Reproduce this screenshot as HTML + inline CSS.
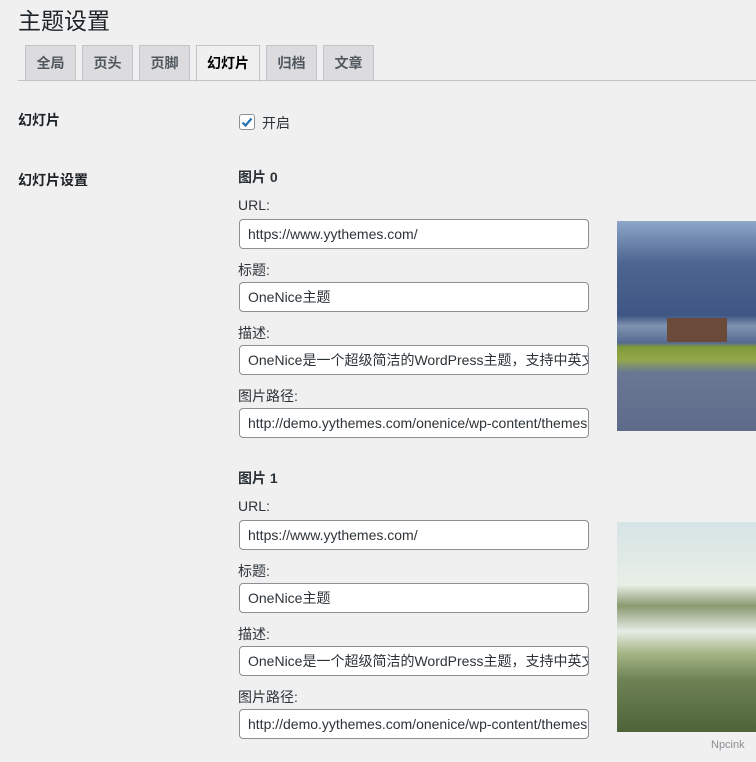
<!DOCTYPE html><html><head><meta charset="utf-8"><style>
body{margin:0;width:756px;height:762px;background:#f0f0f1;font-family:"Liberation Sans","Noto Sans CJK SC",sans-serif;color:#1d2327;position:relative;overflow:hidden;font-size:13px}
.a{position:absolute}
h1{position:absolute;left:18px;top:2px;margin:0;font-size:23px;font-weight:400}
.tab{position:absolute;top:45px;height:34px;border:1px solid #c3c4c7;border-bottom:none;background:#dcdcde;font-size:14px;font-weight:600;color:#50575e;text-align:center;line-height:34px;width:49px}
.tab.on{background:#f0f0f1;color:#000;height:36px;width:62px}
.line{position:absolute;left:18px;right:0;top:80px;border-top:1px solid #c3c4c7}
.lbl{position:absolute;left:18px;font-size:14px;font-weight:600}
.inp{position:absolute;left:239px;width:340px;height:28px;border:1px solid #8c8f94;border-radius:4px;background:#fff;padding-left:8px;line-height:28px;font-size:14px;color:#2c3338;white-space:nowrap;overflow:hidden}
.t{position:absolute;left:238px;font-size:14px;color:#2c3338}
.b{font-weight:600}
</style></head><body>
<h1>主题设置</h1>
<div class="tab" style="left:25px">全局</div>
<div class="tab" style="left:82px">页头</div>
<div class="tab" style="left:139px">页脚</div>
<div class="tab on" style="left:196px">幻灯片</div>
<div class="tab" style="left:266px">归档</div>
<div class="tab" style="left:323px">文章</div>
<div class="line"></div>
<div class="lbl" style="top:110px">幻灯片</div>
<div class="a" style="left:239px;top:114px;width:14px;height:14px;border:1px solid #8c8f94;border-radius:3px;background:#fff"><svg width="14" height="14" viewBox="0 0 14 14"><path d="M2.5 7.5l3 3 6-7" stroke="#2271b1" stroke-width="2.2" fill="none"/></svg></div>
<div class="t" style="left:262px;top:113px">开启</div>
<div class="lbl" style="top:170px">幻灯片设置</div>

<div class="t b" style="top:167px">图片 0</div>
<div class="t" style="top:197px">URL:</div>
<div class="inp" style="top:219px">https://www.yythemes.com/</div>
<div class="t" style="top:260px">标题:</div>
<div class="inp" style="top:282px">OneNice主题</div>
<div class="t" style="top:323px">描述:</div>
<div class="inp" style="top:345px">OneNice是一个超级简洁的WordPress主题，支持中英文</div>
<div class="t" style="top:386px">图片路径:</div>
<div class="inp" style="top:408px">http://demo.yythemes.com/onenice/wp-content/themes</div>
<div class="a" style="left:617px;top:221px;width:139px;height:210px;background:linear-gradient(#8ea6c8 0%,#4e6590 20%,#3f5684 45%,#7f93b0 50%,#556a90 58%,#7f9a3a 60%,#93a848 66%,#6b7894 72%,#5e6a8a 100%)">
<div class="a" style="left:50px;top:97px;width:60px;height:24px;background:#6b4a3a"></div></div>

<div class="t b" style="top:468px">图片 1</div>
<div class="t" style="top:498px">URL:</div>
<div class="inp" style="top:520px">https://www.yythemes.com/</div>
<div class="t" style="top:561px">标题:</div>
<div class="inp" style="top:583px">OneNice主题</div>
<div class="t" style="top:624px">描述:</div>
<div class="inp" style="top:646px">OneNice是一个超级简洁的WordPress主题，支持中英文</div>
<div class="t" style="top:687px">图片路径:</div>
<div class="inp" style="top:709px">http://demo.yythemes.com/onenice/wp-content/themes</div>
<div class="a" style="left:617px;top:522px;width:139px;height:210px;background:linear-gradient(#d6e4e6 0%,#e8efe6 30%,#8a9a70 40%,#e6ece6 52%,#a8b888 62%,#6e8256 75%,#4e6438 100%)"></div>
<div class="a" style="left:711px;top:739px;font-size:11px;color:#8c8f94">Npcink</div>
</body></html>
